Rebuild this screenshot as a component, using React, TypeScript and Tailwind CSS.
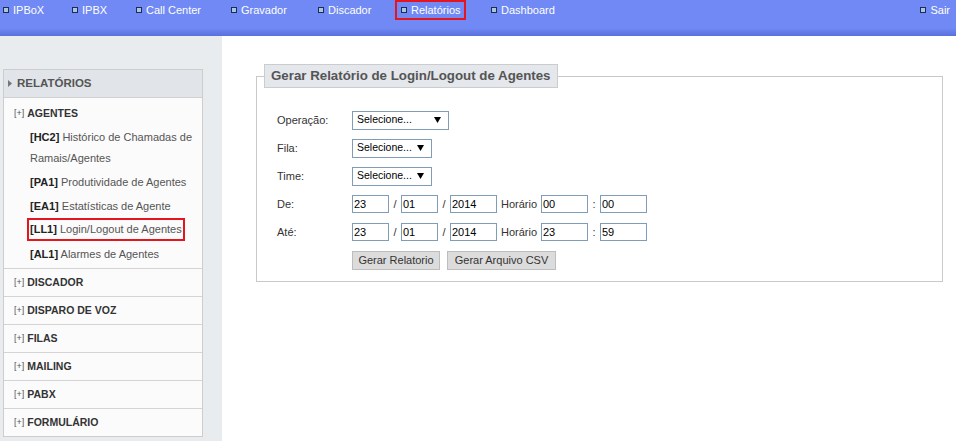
import React from "react";

const NavIcon = () => (
  <span className="inline-block w-[6px] h-[6px] border border-[#1d2b5c] bg-[#a8c6d8] mr-[4px] shrink-0" />
);

const NavItem = ({ label, w }: { label: string; w: string }) => (
  <div className={`flex items-center h-[20px] ${w}`}>
    <NavIcon />
    <span>{label}</span>
  </div>
);

const Arrow = () => (
  <svg width="7" height="6" viewBox="0 0 7 6" className="shrink-0">
    <polygon points="0,0 7,0 3.5,6" fill="#000" />
  </svg>
);

const Select = ({ w }: { w: string }) => (
  <div className={`${w} h-[19px] border border-[#7f9db9] bg-white flex items-center justify-between pl-[4px] pr-[7px] text-[#000] text-[10.5px]`}>
    <span>Selecione...</span>
    <Arrow />
  </div>
);

const Input = ({ v, w }: { v: string; w: string }) => (
  <input
    readOnly
    defaultValue={v}
    className={`${w} h-[18px] border border-[#7f9db9] px-[1px] text-[11px] text-[#000] outline-none bg-white`}
  />
);

const Sep = ({ c }: { c: string }) => <span className="w-[12px] text-center text-[#333]">{c}</span>;

const Group = ({ label }: { label: string }) => (
  <div className="h-[28px] border-t border-[#d4d4d4] flex items-center pl-[10px]">
    <span className="text-[9px] text-[#555] mr-[3px]">[+]</span>
    <span className="text-[10.5px] font-bold text-[#333]">{label}</span>
  </div>
);

const Item = ({ code, text }: { code: string; text: React.ReactNode }) => (
  <div className="pl-[26px] pt-[3px] leading-[21px] text-[11px] text-[#555]">
    <b className="text-[#222]">{code}</b> {text}
  </div>
);

export default function App() {
  return (
    <div
      className="w-full h-[441px] flex flex-col overflow-hidden bg-white"
      style={{ fontFamily: '"Liberation Sans", Arial, sans-serif' }}
    >
      <div className="h-[36px] shrink-0 bg-[linear-gradient(to_bottom,#7089f4_0%,#7089f4_78%,#5a70dc_100%)] text-white text-[11px] flex items-start pl-[3px] pr-[6px]">
        <NavItem label="IPBoX" w="w-[69px]" />
        <NavItem label="IPBX" w="w-[64px]" />
        <NavItem label="Call Center" w="w-[95px]" />
        <NavItem label="Gravador" w="w-[87px]" />
        <NavItem label="Discador" w="w-[77px]" />
        <div className="flex items-center h-[20px] w-[71px] border-2 border-[#e5151f] pl-[4px]">
          <NavIcon />
          <span>Relatórios</span>
        </div>
        <div className="ml-[25px]">
          <NavItem label="Dashboard" w="" />
        </div>
        <div className="ml-auto">
          <NavItem label="Sair" w="" />
        </div>
      </div>

      <div className="flex flex-1">
        <div className="w-[222px] shrink-0 bg-[#e9ecef] pt-[33px] pl-[3px]">
          <div className="w-[200px] border border-[#cdcdcd] bg-[#fbfbfb]">
            <div className="h-[28px] bg-[#e1e4e8] border-b border-[#d0d0d0] flex items-center pl-[3px]">
              <svg width="6" height="7" viewBox="0 0 6 7" className="mr-[4px]">
                <polygon points="1,0 5,3.5 1,7" fill="#777" />
              </svg>
              <span className="text-[11.5px] font-bold text-[#555]">RELATÓRIOS</span>
            </div>
            <div className="pt-[6px] pb-[3px]">
              <div className="h-[20px] flex items-center pl-[10px]">
                <span className="text-[9px] text-[#555] mr-[3px]">[+]</span>
                <span className="text-[10.5px] font-bold text-[#333]">AGENTES</span>
              </div>
              <Item code="[HC2]" text={<>Histórico de Chamadas de<br />Ramais/Agentes</>} />
              <Item code="[PA1]" text="Produtividade de Agentes" />
              <Item code="[EA1]" text="Estatísticas de Agente" />
              <div className="flex pl-[23px] pt-[1px] text-[11px] text-[#555]">
                <span className="h-[23px] flex items-center border-2 border-[#e5151f] px-[1px] whitespace-pre">
                  <b className="text-[#222]">[LL1]</b> Login/Logout de Agentes
                </span>
              </div>
              <Item code="[AL1]" text="Alarmes de Agentes" />
            </div>
            <Group label="DISCADOR" />
            <Group label="DISPARO DE VOZ" />
            <Group label="FILAS" />
            <Group label="MAILING" />
            <Group label="PABX" />
            <Group label="FORMULÁRIO" />
          </div>
        </div>

        <div className="flex-1 bg-white">
          <fieldset className="ml-[34px] mr-[13px] mt-[28px] border border-[#c9c9c9] px-[7px] pb-[7px]">
            <legend className="h-[24px] px-[6px] flex items-center bg-[#e4e7eb] border border-[#cccccc] text-[13.3px] font-bold text-[#555]">
              Gerar Relatório de Login/Logout de Agentes
            </legend>
            <div className="mt-[18px] pl-[13px] text-[11px] text-[#333]">
              <div className="h-[28px] flex items-center">
                <span className="w-[75px]">Operação:</span>
                <Select w="w-[97px]" />
              </div>
              <div className="h-[28px] flex items-center">
                <span className="w-[75px]">Fila:</span>
                <Select w="w-[80px]" />
              </div>
              <div className="h-[28px] flex items-center">
                <span className="w-[75px]">Time:</span>
                <Select w="w-[80px]" />
              </div>
              <div className="h-[28px] flex items-center">
                <span className="w-[75px]">De:</span>
                <Input v="23" w="w-[37px]" />
                <Sep c="/" />
                <Input v="01" w="w-[37px]" />
                <Sep c="/" />
                <Input v="2014" w="w-[47px]" />
                <span className="ml-[4px] w-[40px]">Horário</span>
                <Input v="00" w="w-[47px]" />
                <Sep c=":" />
                <Input v="00" w="w-[47px]" />
              </div>
              <div className="h-[28px] flex items-center">
                <span className="w-[75px]">Até:</span>
                <Input v="23" w="w-[37px]" />
                <Sep c="/" />
                <Input v="01" w="w-[37px]" />
                <Sep c="/" />
                <Input v="2014" w="w-[47px]" />
                <span className="ml-[4px] w-[40px]">Horário</span>
                <Input v="23" w="w-[47px]" />
                <Sep c=":" />
                <Input v="59" w="w-[47px]" />
              </div>
              <div className="h-[28px] flex items-center pl-[75px] gap-[7px]">
                <button className="w-[88px] h-[19px] bg-[#dcdcdc] border border-[#bdbdbd] text-[11px] text-[#333]">
                  Gerar Relatorio
                </button>
                <button className="w-[109px] h-[19px] bg-[#dcdcdc] border border-[#bdbdbd] text-[11px] text-[#333]">
                  Gerar Arquivo CSV
                </button>
              </div>
            </div>
          </fieldset>
        </div>
      </div>
    </div>
  );
}
